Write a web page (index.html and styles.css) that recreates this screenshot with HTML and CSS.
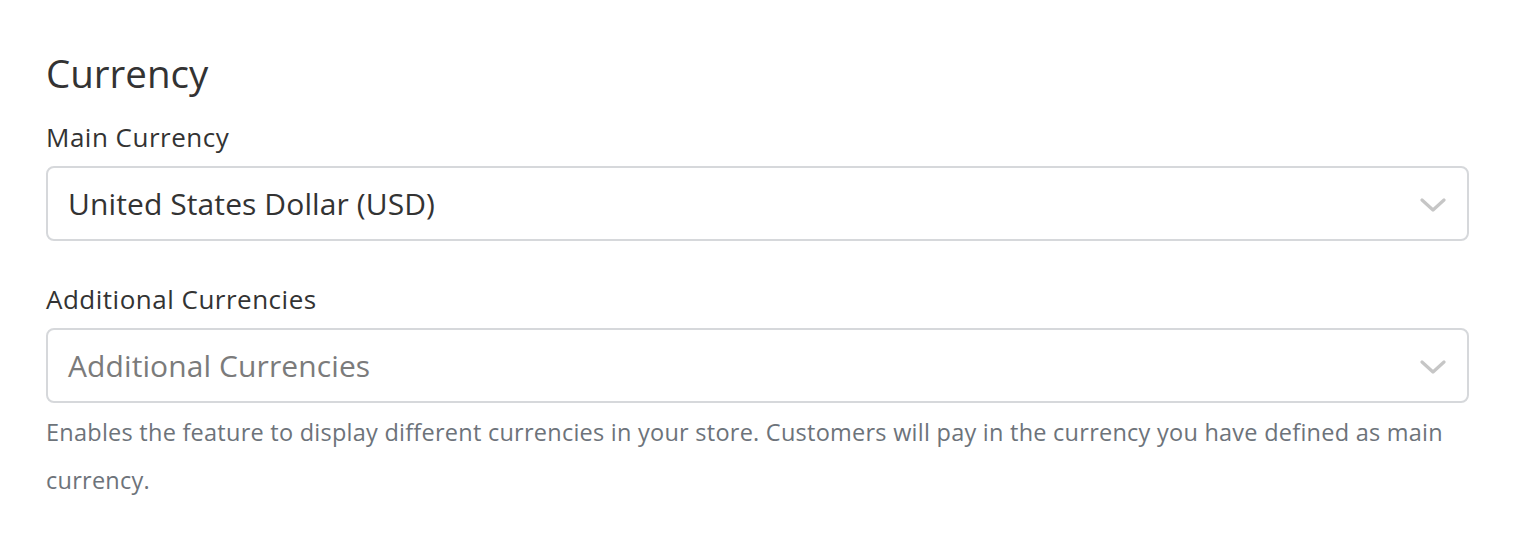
FILE: index.html
```html
<!DOCTYPE html>
<html>
<head>
<meta charset="utf-8">
<link rel="stylesheet" href="styles.css">
</head>
<body>
<section class="panel">
  <h1 class="title">Currency</h1>
  <div class="field">
    <label class="label">Main Currency</label>
    <div class="select">
      <span class="value">United States Dollar (USD)</span>
      <svg class="chev" width="26" height="16" viewBox="0 0 26 16"><path d="M2 4 L13 14 L24 4" fill="none" stroke="#c6c6c6" stroke-width="3.2" stroke-linecap="round" stroke-linejoin="round"/></svg>
    </div>
  </div>
  <div class="field">
    <label class="label">Additional Currencies</label>
    <div class="select">
      <span class="value placeholder">Additional Currencies</span>
      <svg class="chev" width="26" height="16" viewBox="0 0 26 16"><path d="M2 4 L13 14 L24 4" fill="none" stroke="#c6c6c6" stroke-width="3.2" stroke-linecap="round" stroke-linejoin="round"/></svg>
    </div>
    <p class="help">Enables the feature to display different currencies in your store. Customers will pay in the currency you have defined as main currency.</p>
  </div>
</section>
</body>
</html>
```
FILE: styles.css
```css
html, body {
  margin: 0;
  padding: 0;
  background: #ffffff;
}
body {
  font-family: "Open Sans", Lato, sans-serif;
  color: #333333;
}
.panel {
  padding: 50px 45px 0 46px;
}
.title {
  margin: 0;
  font-size: 38.5px;
  font-weight: 500;
  line-height: 46px;
  color: #333333;
}
.field {
  display: flex;
  flex-direction: column;
}
.label {
  margin-top: 24px;
  font-size: 26px;
  letter-spacing: 0.5px;
  line-height: 34px;
  color: #333333;
}
.field + .field .label {
  margin-top: 41px;
}
.select {
  margin-top: 12px;
  height: 71px;
  border: 2px solid #d6d8db;
  border-radius: 8px;
  display: flex;
  align-items: center;
  justify-content: space-between;
  padding: 0 21px 0 20px;
}
.value {
  font-size: 30px;
  letter-spacing: 0.1px;
  color: #333333;
}
.placeholder {
  color: #7b7b7b;
}
.chev {
  display: block;
}
.help {
  margin: 5px 0 0;
  font-size: 23.5px;
  letter-spacing: 0.25px;
  line-height: 48px;
  color: #6d737a;
}
```
